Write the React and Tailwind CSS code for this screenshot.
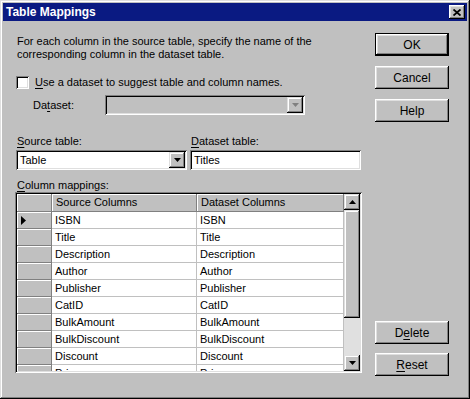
import React from "react";

function Arrow({ dir = "down", color = "#000" }) {
  return (
    <svg width="7" height="4" viewBox="0 0 7 4" className="block">
      {dir === "down" ? (
        <polygon points="0,0 7,0 3.5,4" fill={color} />
      ) : (
        <polygon points="0,4 7,4 3.5,0" fill={color} />
      )}
    </svg>
  );
}

function U({ children }) {
  return <span className="underline underline-offset-[2px]">{children}</span>;
}

function Btn({ children, def = false, className = "" }) {
  return (
    <div
      className={
        "h-[23px] w-[74px] flex items-center justify-center bg-[#c0c0c0] " +
        (def
          ? "border border-black shadow-[inset_-1px_-1px_#000,inset_1px_1px_#fff,inset_-2px_-2px_#808080,inset_2px_2px_#dfdfdf] "
          : "shadow-[inset_-1px_-1px_#000,inset_1px_1px_#fff,inset_-2px_-2px_#808080,inset_2px_2px_#dfdfdf] ") +
        className
      }
    >
      <span className="text-[12px] leading-none">{children}</span>
    </div>
  );
}

export default function App() {
  const rows = [
    "ISBN",
    "Title",
    "Description",
    "Author",
    "Publisher",
    "CatID",
    "BulkAmount",
    "BulkDiscount",
    "Discount",
    "Price",
  ];
  return (
    <div className="w-[470px] h-[399px] bg-[#c0c0c0] flex flex-col p-[3px] text-[11px] text-black font-['Liberation_Sans',Arial,sans-serif] shadow-[inset_-1px_-1px_#000,inset_1px_1px_#dfdfdf,inset_-2px_-2px_#808080,inset_2px_2px_#fff]">
      {/* Title bar */}
      <div className="h-[18px] bg-[#0a1a82] flex items-center justify-between pl-[3px] pr-[2px]">
        <span className="text-white font-bold text-[12px] leading-none">Table Mappings</span>
        <div className="w-[16px] h-[14px] bg-[#c0c0c0] flex items-center justify-center shadow-[inset_-1px_-1px_#000,inset_1px_1px_#fff,inset_-2px_-2px_#808080,inset_2px_2px_#dfdfdf]">
          <svg width="8" height="7" viewBox="0 0 8 7">
            <path d="M0.5 0.5 L7.5 6.5 M7.5 0.5 L0.5 6.5" stroke="#000" strokeWidth="1.8" />
          </svg>
        </div>
      </div>

      {/* Body */}
      <div className="flex flex-1 pl-[12px] pr-[18px]">
        {/* Left column */}
        <div className="w-[347px] flex flex-col">
          <p className="mt-[14px] pl-[2px] leading-[13px]">
            For each column in the source table, specify the name of the
            <br />
            corresponding column in the dataset table.
          </p>

          <div className="mt-[15px] flex items-center h-[13px]">
            <div className="ml-[1px] w-[13px] h-[13px] bg-white shadow-[inset_1px_1px_#808080,inset_-1px_-1px_#fff,inset_2px_2px_#000,inset_-2px_-2px_#dfdfdf]" />
            <span className="ml-[6px]">
              <U>U</U>se a dataset to suggest table and column names.
            </span>
          </div>

          <div className="mt-[6px] flex items-center h-[20px]">
            <div className="w-[90px] pl-[18px]">
              Da<U>t</U>aset:
            </div>
            <div className="w-[200px] h-[20px] bg-[#c0c0c0] flex justify-end p-[2px] shadow-[inset_1px_1px_#808080,inset_-1px_-1px_#fff,inset_2px_2px_#000,inset_-2px_-2px_#dfdfdf]">
              <div className="w-[16px] h-[16px] flex items-center justify-center bg-[#c0c0c0] shadow-[inset_-1px_-1px_#000,inset_1px_1px_#dfdfdf,inset_-2px_-2px_#808080,inset_2px_2px_#fff]">
                <Arrow color="#808080" />
              </div>
            </div>
          </div>

          <div className="mt-[20px] flex">
            <div className="w-[171px] ml-[1px] flex flex-col">
              <div className="leading-[13px] pl-[1px]">
                <U>S</U>ource table:
              </div>
              <div className="mt-[2px] h-[20px] bg-white flex items-center p-[2px] shadow-[inset_1px_1px_#808080,inset_-1px_-1px_#fff,inset_2px_2px_#000,inset_-2px_-2px_#dfdfdf]">
                <span className="flex-1 pl-[2px]">Table</span>
                <div className="w-[16px] h-[16px] flex items-center justify-center bg-[#c0c0c0] shadow-[inset_-1px_-1px_#000,inset_1px_1px_#dfdfdf,inset_-2px_-2px_#808080,inset_2px_2px_#fff]">
                  <Arrow />
                </div>
              </div>
            </div>
            <div className="w-[171px] ml-[3px] flex flex-col">
              <div className="leading-[13px] pl-[1px]">
                <U>D</U>ataset table:
              </div>
              <div className="mt-[2px] h-[20px] bg-white flex items-center p-[2px] shadow-[inset_1px_1px_#808080,inset_-1px_-1px_#fff,inset_2px_2px_#000,inset_-2px_-2px_#dfdfdf]">
                <span className="flex-1 pl-[2px]">Titles</span>
              </div>
            </div>
          </div>

          <div className="mt-[9px] leading-[13px] pl-[2px]">
            <U>C</U>olumn mappings:
          </div>

          {/* Grid */}
          <div className="w-[347px] h-[181px] flex p-[2px] bg-[#c0c0c0] shadow-[inset_1px_1px_#808080,inset_-1px_-1px_#fff,inset_2px_2px_#000,inset_-2px_-2px_#dfdfdf]">
            <div className="flex-1 bg-white overflow-hidden flex flex-col">
              <div className="flex h-[18px] shrink-0">
                <div className="w-[35px] bg-[#c0c0c0] border-r border-b border-[#808080] shadow-[inset_1px_1px_#fff]" />
                <div className="w-[145px] bg-[#c0c0c0] border-r border-b border-[#808080] shadow-[inset_1px_1px_#fff] flex items-center pl-[4px]">
                  Source Columns
                </div>
                <div className="w-[147px] bg-[#c0c0c0] border-r border-b border-[#808080] shadow-[inset_1px_1px_#fff] flex items-center pl-[4px]">
                  Dataset Columns
                </div>
              </div>
              {rows.map((r, i) => (
                <div key={r} className="flex h-[17px] shrink-0">
                  <div className="w-[35px] bg-[#c0c0c0] border-r border-b border-[#808080] shadow-[inset_1px_1px_#fff] flex items-center pl-[4px]">
                    {i === 0 && (
                      <svg width="5" height="9" viewBox="0 0 5 9">
                        <polygon points="0,0 5,4.5 0,9" fill="#000" />
                      </svg>
                    )}
                  </div>
                  <div className="w-[145px] border-r border-b border-[#c0c0c0] flex items-center pl-[3px]">
                    {r}
                  </div>
                  <div className="w-[147px] border-r border-b border-[#c0c0c0] flex items-center pl-[3px]">
                    {r}
                  </div>
                </div>
              ))}
            </div>
            {/* Scrollbar */}
            <div className="w-[16px] flex flex-col">
              <div className="h-[16px] flex items-center justify-center bg-[#c0c0c0] shadow-[inset_-1px_-1px_#000,inset_1px_1px_#dfdfdf,inset_-2px_-2px_#808080,inset_2px_2px_#fff]">
                <Arrow dir="up" />
              </div>
              <div className="h-[108px] bg-[#c0c0c0] shadow-[inset_-1px_-1px_#000,inset_1px_1px_#dfdfdf,inset_-2px_-2px_#808080,inset_2px_2px_#fff]" />
              <div className="flex-1 bg-[#e0e0e0]" />
              <div className="h-[16px] flex items-center justify-center bg-[#c0c0c0] shadow-[inset_-1px_-1px_#000,inset_1px_1px_#dfdfdf,inset_-2px_-2px_#808080,inset_2px_2px_#fff]">
                <Arrow />
              </div>
            </div>
          </div>
        </div>

        {/* Right column */}
        <div className="ml-auto w-[74px] flex flex-col pb-[20px]">
          <Btn def className="mt-[12px]">OK</Btn>
          <Btn className="mt-[10px]">Cancel</Btn>
          <Btn className="mt-[10px]">Help</Btn>
          <Btn className="mt-auto">
            D<U>e</U>lete
          </Btn>
          <Btn className="mt-[9px]">
            <U>R</U>eset
          </Btn>
        </div>
      </div>
    </div>
  );
}
